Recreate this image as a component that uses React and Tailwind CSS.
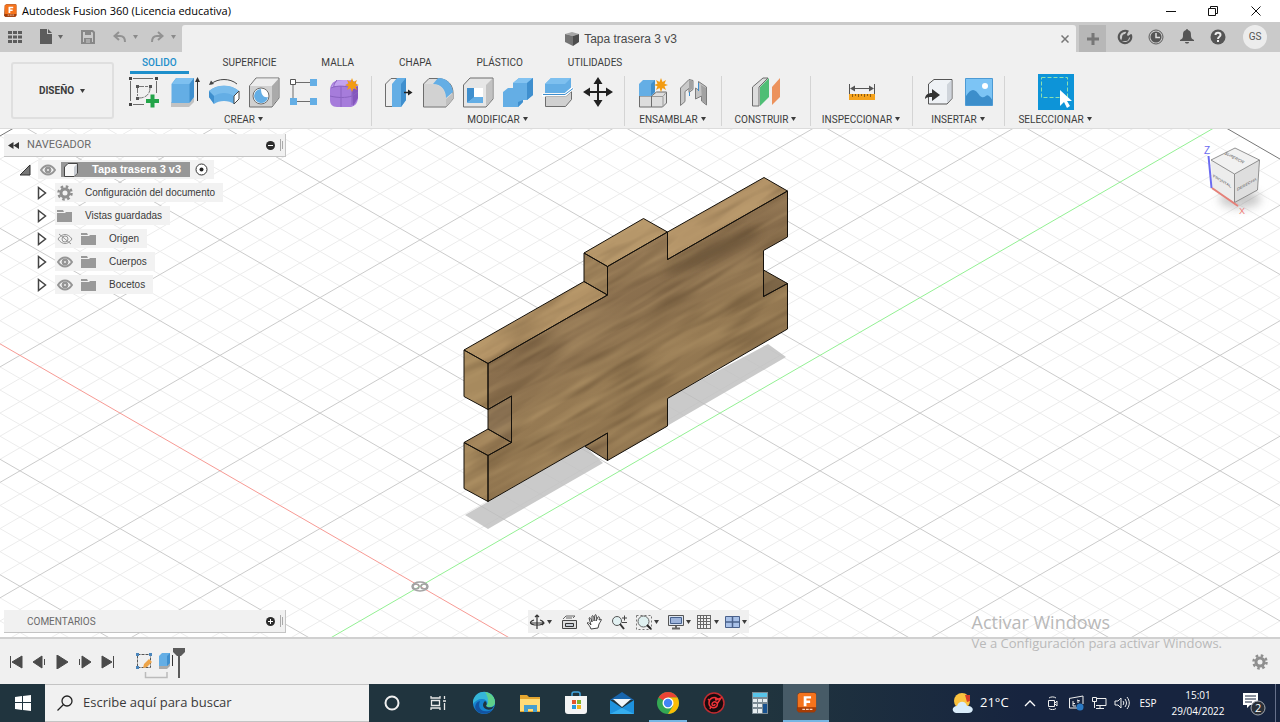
import React from "react";

const INK = "#4a4a4a";

/* ---------- shared pieces ---------- */

function Icon({ w = 16, h = w, box, children }) {
  return (
    <svg width={w} height={h} viewBox={box || `0 0 ${w} ${h}`} fill="none" aria-hidden="true" className="shrink-0">
      {children}
    </svg>
  );
}

function Caret({ color = "#3c3c3c" }) {
  return (
    <Icon w={7} h={6}>
      <path d="M1 1h5L3.500 5z" fill={color} />
    </Icon>
  );
}

function IconButton({ label, className = "", children }) {
  return (
    <button type="button" aria-label={label} className={`flex items-center justify-center ${className}`}>
      {children}
    </button>
  );
}

function FusionLogo({ size }) {
  return (
    <Icon w={size} box="0 0 24 24">
      <path d="M3 2 6 .5h15A2 2 0 0 1 23 3v16l-2 3H4l-2-2z" fill="#8a3206" />
      <path d="M5 1h16a2 2 0 0 1 2 2v14H3V3z" fill="#f5731c" />
      <path d="M3 17h20v3l-2 2H4l-2-2z" fill="#a63c05" />
      <path d="M9.500 4.500h8v2.600h-5v2.300h4v2.500h-4v3.600h-3z" fill="#fff" />
      <path d="M8 19h3M12 19h3M16 19h3" stroke="#f7d4bd" strokeWidth="1.500" />
    </Icon>
  );
}

/* ---------- ribbon icons ---------- */

const BLUE = "#64aee5";
const BLUE_D = "#3f8fce";
const LINE = "#6d6d6d";

function Star({ x, y }) {
  return (
    <path
      transform={`translate(${x} ${y})`}
      d="M0-7 1.500-3 5-5 3.500-1.300 7 0 3.500 1.300 5 5 1.500 3 0 7-1.500 3-5 5-3.500 1.300-7 0-3.500-1.300-5-5-1.500-3z"
      fill="#f39c12"
    />
  );
}

const ribbonIcons = {
  sketch: (
    <>
      <path d="M5 2.500h20M2.500 5v20M28.500 5v12M5 28.500h11" stroke={LINE} />
      <path d="M1 1h3v3H1zM27 1h3v3h-3zM1 27h3v3H1z" fill="#444" />
      <path d="M11 10.500h9M9.500 12v8M22 12c0 6-4 10-11 10" stroke="#777" strokeDasharray="5 1" />
      <path d="M8 9h3v3H8zM21 9h3v3h-3zM8 21h3v3H8z" fill="#555" />
      <path d="M24.500 18.500v13M18 25h13" stroke="#23a449" strokeWidth="4" />
    </>
  ),
  extrude: (
    <>
      <path d="M3 26v5h18l5-5v-4z" fill="#c2c2c2" />
      <path d="M3.500 8 8 2h18v19l-5 6H3.500z" fill={BLUE} />
      <path d="M4 8 8.500 2H26l-4.500 6z" fill="#7dc0f0" />
      <path d="M21.500 8 26 2v19l-4.500 6z" fill={BLUE_D} />
      <path d="M29.500 25V5" stroke="#333" />
      <path d="m29.500 1 2.500 5h-5z" fill="#333" />
    </>
  ),
  revolve: (
    <>
      <path d="M3 8c7-6 19-6 26 0" stroke="#444" />
      <path d="m1 9 2-4.500L6 8z" fill="#444" />
      <path d="M1 15c8-7 22-7 30 0v8l-5 5c-5-4-15-4-20 0l-5-7z" fill={BLUE} />
      <path d="M1 15c8-7 22-7 30 0l-5 5c-6-4-14-4-20 0z" fill="#79bcec" />
      <path d="m26 20 5-5v8l-5 5z" fill="#fff" stroke="#444" />
      <path d="M1 15v6l5 7v-8z" fill={BLUE_D} />
    </>
  ),
  hole: (
    <>
      <path d="M1.500 10 8 2h23v20l-7 9H1.500z" fill="#d0d0d0" stroke={LINE} />
      <path d="M2 10 8.500 2.500h22L24 10z" fill="#ededed" />
      <path d="M24 10 30.500 3v19L24 30z" fill="#aaa" />
      <circle cx="13" cy="20" r="8" fill="#fff" stroke={LINE} />
      <path d="M13 13a7 7 0 1 0 7 8c-4 1-7-2-7-8z" fill={BLUE} />
    </>
  ),
  pattern: (
    <>
      <path d="M8 6.500h14M5 9v14M8 25.500h14" stroke={LINE} />
      <path d="M2.500 3.500h5v5h-5z" fill="#fff" stroke="#555" />
      <path d="M22 3h7v7h-7zM2 22h7v7H2zM22 22h7v7h-7z" fill={BLUE} />
    </>
  ),
  form: (
    <>
      <path d="M2 14c0-5 3-9 9-10h11c6 1 8 5 8 9v8c0 6-3 9-7 10H9c-5 0-7-3-7-7z" fill="#a67cdb" />
      <path d="M3 12c2-5 6-8 12-8h8l-6 6H6z" fill="#c3a3ef" />
      <path d="m24 14 6-4v12l-5 8z" fill="#8457bd" />
      <path d="M2 20c8 2 16 2 22 0l6-4M13 10v21M3 12c7-3 14-2 21 0v17M9 4c-4 5-3 6-3 7" stroke="#8a63c0" />
      <Star x="24" y="9" />
    </>
  ),
  pressPull: (
    <>
      <path d="M3.500 8 9 2.500h8v28H3.500z" fill="#eee" stroke={LINE} />
      <path d="M10 8 15 2h9v22l-5 7h-9z" fill={BLUE} />
      <path d="M19 8 24 2v22l-5 7z" fill={BLUE_D} />
      <path d="M22 16.500h6" stroke="#222" strokeWidth="1.500" />
      <path d="m26 13.500 4.500 3-4.500 3z" fill="#222" />
    </>
  ),
  fillet: (
    <>
      <path d="M1.500 8 7 2.500h9C26 3 31 9 31 17v6l-7 8H1.500z" fill="#ddd" stroke={LINE} />
      <path d="M2 8h7c9 0 15 6 15 15v7H2z" fill="#d2d2d2" />
      <path d="M11 8 16 2c9 0 14 6 15 14l-7 6C24 14 19 8 11 8z" fill={BLUE} />
      <path d="m24 23 7-6v6l-7 8z" fill="#c0c0c0" />
    </>
  ),
  shell: (
    <>
      <path d="M1.500 9 8 2h23v21l-7 8H1.500z" fill="#e6e6e6" stroke={LINE} />
      <path d="m24 9 6.500-6.500V23L24 30z" fill="#c2c2c2" />
      <path d="M5 12h16v15H5z" fill="#fff" />
      <path d="M5 12h7v10l-7 5z" fill={BLUE_D} />
      <path d="m5 27 7-6h9v6z" fill={BLUE} />
    </>
  ),
  combine: (
    <>
      <path d="M1 16l5-4h5V7l6-5h14v17l-6 5h-4v2l-5 5H1z" fill={BLUE} />
      <path d="m11 7 6-5h14l-6 5z" fill="#83c3f1" />
      <path d="m25 7 6-5v17l-6 5zM16 26l5-2v2l-5 5z" fill={BLUE_D} />
    </>
  ),
  split: (
    <>
      <path d="M3.500 20.500h20l6-5v8l-6 7h-20z" fill="#d0d0d0" stroke={LINE} />
      <path d="M3 8l6-6h20v10l-6 5H3z" fill={BLUE} />
      <path d="m3 8 6-6h20l-6 6z" fill="#7ec0ef" />
      <path d="M0 19h23l8-7" stroke="#fff" strokeWidth="3" />
      <path d="M1 18.500h22l8-6" stroke={BLUE_D} />
    </>
  ),
  move: (
    <>
      <path d="M16 5v22M5 16h22" stroke="#222" strokeWidth="2" />
      <path d="m16 1 4.500 7h-9zM16 31l4.500-7h-9zM1 16l7-4.500v9zM31 16l-7-4.500v9z" fill="#222" />
    </>
  ),
  component: (
    <>
      <path d="M2.500 20h12v11h-12zM14.500 20l5-4h10v11l-4 4h-11z" fill="#ddd" stroke={LINE} />
      <path d="M2 8l4-4h12v12l-4 4H2z" fill={BLUE} />
      <path d="m14 8 4-4v12l-4 4z" fill={BLUE_D} />
      <path d="M15 20.500h11l3-4M26 21v9" stroke="#999" />
      <Star x="24" y="9" />
    </>
  ),
  joint: (
    <>
      <path d="M3.500 12 12 3.500l4 1v9l-4 3v-4l-4 3v10l-4.500 4z" fill="#c9c9c9" stroke="#7c7c7c" />
      <path d="M21.500 5.500 29.500 11v18l-5-4v-5l-6 3V12l3 2z" fill="#c3c3c3" stroke="#7c7c7c" />
      <path d="m24 9 5 3v16l-4-3zM12 4l3 1v8l-3 2z" fill="#a2a2a2" />
      <path d="M12.500 16v4M21.500 7v8" stroke={BLUE_D} />
    </>
  ),
  plane: (
    <>
      <path d="M2.500 11 13 2h5L9 11v19H2.500z" fill="#ddd" stroke={LINE} />
      <path d="M10 11 19 2v19l-9 9z" fill="#4fbe75" />
      <path d="m22 11 8-9v19l-8 8z" fill="#ec925c" />
    </>
  ),
  measure: (
    <>
      <path d="M3.500 8v10M28.500 8v10M6 12.500h20" stroke="#555" />
      <path d="m4 12.500 5-3v6zM28 12.500l-5-3v6z" fill="#555" />
      <path d="M3 18h26v6H3z" fill="#f5a31d" />
      <path d="M6.500 18v3M9.500 18v2M12.500 18v3M15.500 18v2M18.500 18v3M21.500 18v2M24.500 18v3" stroke="#8c5b10" />
    </>
  ),
  derive: (
    <>
      <path d="M5.500 8 11 3.500h18v19L24 28H5.500z" fill="#eff2f6" stroke="#555" />
      <path d="M24 8.500 28.500 4v18L24 27zM6 8.500h18" fill="#cfd4db" />
      <path d="M2 23c0-4 3-6 7-6v-4l8 6-8 6v-4c-3 0-5 0-7 2z" fill="#333" />
    </>
  ),
  image: (
    <>
      <path d="M2.500 2.500h27v27h-27z" fill="#7cc4f5" stroke="#4c9ad4" />
      <circle cx="22" cy="10" r="3" fill="#fff" />
      <path d="M3 20c5-8 9-8 14 0 5 4 6-3 9 0 2 2 3 3 3 4v5H3z" fill="#3c8ecb" />
    </>
  ),
  select: (
    <>
      <path d="M1.500 1.500h26v20h-26z" stroke="#8ce0b0" strokeDasharray="4 2" />
      <path d="M20 14v16l4-4 3 6 3-2-3-5h5z" fill="#fff" />
    </>
  ),
};

function RibbonGroup({ name, icons, width, active }) {
  return (
    <section className={`flex shrink-0 flex-col items-center ${width}`}>
      <div className="flex h-9 items-center">
        {icons.map((key) => (
          <IconButton key={key} label={key} className={active ? "h-9 w-9 bg-[#0d94d8]" : "h-9 w-10"}>
            <Icon w={32}>{ribbonIcons[key]}</Icon>
          </IconButton>
        ))}
      </div>
      <button type="button" className="flex h-[18px] items-center gap-[2px] whitespace-nowrap">
        {name}
        <Caret />
      </button>
    </section>
  );
}

const groups = [
  { name: "CREAR", width: "w-[251px] pr-[3px]", icons: ["sketch", "extrude", "revolve", "hole", "pattern", "form"] },
  { name: "MODIFICAR", width: "w-[252px]", icons: ["pressPull", "fillet", "shell", "combine", "split", "move"] },
  { name: "ENSAMBLAR", width: "w-[96px]", icons: ["component", "joint"] },
  { name: "CONSTRUIR", width: "w-[88px]", icons: ["plane"] },
  { name: "INSPECCIONAR", width: "w-[101px]", icons: ["measure"] },
  { name: "INSERTAR", width: "w-[91px]", icons: ["derive", "image"] },
  { name: "SELECCIONAR", width: "w-[101px]", icons: ["select"], active: true },
];

/* ---------- top bars ---------- */

function TitleBar() {
  return (
    <header className="flex h-[22px] shrink-0 items-center bg-white pl-[3px] font-['Open_Sans',sans-serif] text-[11px] text-black">
      <FusionLogo size={14} />
      <h1 className="ml-[5px] flex-1">Autodesk Fusion 360 (Licencia educativa)</h1>
      <IconButton label="Minimizar" className="h-5 w-[42px]">
        <Icon w={10}><path d="M0 5.500h10" stroke="#111" /></Icon>
      </IconButton>
      <IconButton label="Restaurar" className="h-5 w-[42px]">
        <Icon w={10}><path d="M.5 2.500h7v7h-7zM2.500 2V.5h7v7H8" stroke="#111" /></Icon>
      </IconButton>
      <IconButton label="Cerrar" className="mr-[2px] h-5 w-[44px]">
        <Icon w={10}><path d="m.5.5 9 9m0-9-9 9" stroke="#111" /></Icon>
      </IconButton>
    </header>
  );
}

function TabBar() {
  return (
    <div className="flex h-[30px] shrink-0 bg-[#cacaca] pt-[3px]">
      <div className="flex w-[182px] shrink-0 items-center pb-1 pl-2">
        <IconButton label="Panel de datos">
          <Icon w={14}>
            <path d="M0 1h4v3H0zM5 1h4v3H5zM10 1h4v3h-4zM0 5.500h4v3H0zM5 5.500h4v3H5zM10 5.500h4v3h-4zM0 10h4v3H0zM5 10h4v3H5zM10 10h4v3h-4z" fill="#5c5c5c" />
          </Icon>
        </IconButton>
        <IconButton label="Archivo" className="ml-[17px] gap-1">
          <Icon w={14} h={15}><path d="M1 0h7v5h5v10H1zM9 0l4 4H9z" fill="#5c5c5c" /></Icon>
          <Caret color="#666" />
        </IconButton>
        <IconButton label="Guardar" className="ml-[17px]">
          <Icon w={14}>
            <path d="M1 1h10.500L13 2.500V13H1z" stroke="#888" strokeWidth="2" />
            <path d="M4 1h6v4H4zM3 8h8v5H3z" fill="#888" />
            <path d="M5 10h4M5 12h4" stroke="#cacaca" />
          </Icon>
        </IconButton>
        <IconButton label="Deshacer" className="ml-[18px] gap-[6px]">
          <Icon w={13} h={12}><path d="M6 1 1.500 5 6 9M2 5h5c3 0 5 2 5 6" stroke="#929292" strokeWidth="2" /></Icon>
          <Caret color="#8a8a8a" />
        </IconButton>
        <IconButton label="Rehacer" className="ml-3 gap-[6px]">
          <Icon w={13} h={12}><path d="M7 1 11.500 5 7 9M11 5H6c-3 0-5 2-5 6" stroke="#929292" strokeWidth="2" /></Icon>
          <Caret color="#8a8a8a" />
        </IconButton>
      </div>
      <div className="flex flex-1 items-center rounded-t-[3px] bg-[#f0f0f0] pr-[5px]">
        <div className="flex flex-1 items-center justify-center gap-1 font-['Liberation_Sans',sans-serif] text-[12px] text-[#4a4a4a]">
          <Icon w={16}>
            <path d="m1 3 7-2 7 2-6 2z" fill="#a7a7a7" />
            <path d="m1 3 8 2v10l-8-4z" fill="#747474" />
            <path d="m9 5 6-2v8l-6 4z" fill="#4d4d4d" />
          </Icon>
          Tapa trasera 3 v3
        </div>
        <IconButton label="Cerrar documento" className="h-4 w-3">
          <Icon w={8}><path d="m.5.5 7 7m0-7-7 7" stroke="#777" strokeWidth="1.500" /></Icon>
        </IconButton>
      </div>
      <IconButton label="Nuevo diseño" className="ml-[3px] w-[27px] bg-[#b7b7b7]">
        <Icon w={12}><path d="M6 0v12M0 6h12" stroke="#777" strokeWidth="3" /></Icon>
      </IconButton>
      <div className="flex items-center pb-1 pl-[3px]">
        <IconButton label="Extensiones" className="w-[31px]">
          <Icon w={16}>
            <circle cx="8" cy="8" r="6.200" stroke="#555" strokeWidth="2.200" strokeDasharray="34 5" transform="rotate(-20 8 8)" />
            <path d="M4 12 5 9c0-3 1-4 3-4l2-3 1 1-1 3 1 1 3-2 1 1-3 3c-1 3-2 3-4 3z" fill="#555" />
          </Icon>
        </IconButton>
        <IconButton label="Estado de trabajos" className="w-[31px]">
          <Icon w={16}>
            <circle cx="8" cy="8" r="7" stroke="#5c5c5c" />
            <circle cx="8" cy="8" r="5.500" fill="#555" />
            <path d="M8 4v4.500h4" stroke="#ddd" strokeWidth="1.500" />
          </Icon>
        </IconButton>
        <IconButton label="Notificaciones" className="w-[31px]">
          <Icon w={14} h={15}><path d="M7 0c1 0 1 1 1 1 3 1 3 3 3 6 0 2 1 3 3 4v1H0v-1c2-1 3-2 3-4 0-3 0-5 3-6 0 0 0-1 1-1zM5 13h4c0 2-4 2-4 0z" fill="#555" /></Icon>
        </IconButton>
        <IconButton label="Ayuda" className="w-[31px]">
          <Icon w={16}>
            <circle cx="8" cy="8" r="7.500" fill="#555" />
            <path d="M5.500 6c0-3 5-3 5 0 0 2-2.500 1.500-2.500 4M8 11v2" stroke="#eee" strokeWidth="2" />
          </Icon>
        </IconButton>
        <button type="button" className="mr-[13px] ml-[10px] h-6 w-6 rounded-full bg-[#ececec] font-['Roboto',sans-serif] text-[10px] text-[#555]">GS</button>
      </div>
    </div>
  );
}

function Ribbon() {
  const tabs = ["SUPERFICIE", "MALLA", "CHAPA", "PLÁSTICO", "UTILIDADES"];
  return (
    <div className="flex h-[77px] shrink-0 border-b border-[#dcdcdc] bg-[#f0f0f0] font-['Roboto',sans-serif] text-[10px] text-[#3c3c3c]">
      <button type="button" className="mt-[10px] ml-[11px] flex h-[57px] w-[103px] shrink-0 items-center justify-center gap-[5px] rounded-[3px] border-2 border-[#dfdfdf] font-bold">
        DISEÑO <Caret />
      </button>
      <div className="ml-[6px] flex flex-col">
        <nav className="flex h-[22px] gap-[23px] pl-[10px]">
          <button type="button" className="border-b-[3px] border-[#1e8fcb] px-3 pt-[2px] font-medium text-[#1e8fcb]">SOLIDO</button>
          {tabs.map((t) => (
            <button type="button" key={t} className="border-b-[3px] border-transparent px-[11px] pt-[2px]">{t}</button>
          ))}
        </nav>
        <div className="flex">
          {groups.map((g, i) => (
            <React.Fragment key={g.name}>
              {i > 0 && <div className="my-[2px] w-px bg-[#d4d4d4]" />}
              <RibbonGroup {...g} />
            </React.Fragment>
          ))}
        </div>
      </div>
    </div>
  );
}

/* ---------- 3D viewport ---------- */

const SLOPE = 0.57735;
const OX = 420;
const OY = 586.3;

function gridLines() {
  const lines = [];
  const pt = (u, v) => [OX + (u + v) * 20, OY + (u - v) * 20 * SLOPE];
  // u runs down-right along the red axis, v runs up-right along the green axis
  for (let n = -30; n <= 60; n++) {
    const major = n % 5 === 0;
    if (n <= 40) {
      const [x1, y1] = pt(-30, n);
      const [x2, y2] = pt(60, n);
      lines.push({ k: `u${n}`, x1, y1, x2, y2, major, edge: n === 40, axis: n === 0 ? "#f79a94" : null });
    }
    const [x1, y1] = pt(n, -40);
    const [x2, y2] = pt(n, 40);
    lines.push({ k: `v${n}`, x1, y1, x2, y2, major, edge: n === -30, axis: n === 0 ? "#93f093" : null });
  }
  return lines.sort((a, b) => rank(a) - rank(b));
}

function rank(l) {
  return l.axis ? 2 : l.major ? 1 : 0;
}

function strokeOf(l) {
  if (l.axis) return l.axis;
  if (l.edge) return "#777";
  return l.major ? "#cbcbcb" : "#ececec";
}

const FRONT =
  "488,363.500 607.500,295 607.500,266.500 667.500,232 667.500,259.500 787.500,191 787.500,237 763.500,250.500 763.500,296.500 787.500,283.500 787.500,329 667.500,398.500 667.500,426 607.500,460.500 607.500,433 488,501.500 488,455.500 511.500,442.500 511.500,396 488,409.500";

const SIDES = [
  ["464,350 488,363.500 607.500,295 584,281.500", "#b39366"],
  ["464,350 488,363.500 488,409.500 464,396.500", "#a78a5e"],
  ["488,409.500 511.500,396 511.500,442.500 488,429", "#8a7152"],
  ["464,442.500 488,429 511.500,442.500 488,455.500", "#a08259"],
  ["464,442.500 488,455.500 488,501.500 464,488.500", "#a4875c"],
  ["584,253 607.500,266.500 607.500,295 584,281.500", "#9b7f58"],
  ["584,253 643.500,218.500 667.500,232 607.500,266.500", "#b6976a"],
  ["667.500,232 764,177.500 787.500,191 667.500,259.500", "#b49468"],
  ["763.500,270 787.500,283.500 763.500,296.500", "#7f6849"],
  ["585,446.500 607.500,433 607.500,460.500", "#876d4c"],
];

function Model() {
  return (
    <g>
      <path d="M465 515 585 446l18 17-115 66zM667 398l101-54 18 13-119 69z" fill="#bdbdbd" fillOpacity=".8" />
      <clipPath id="silhouette">
        <polygon points={FRONT} />
        {SIDES.map(([p]) => <polygon key={p} points={p} />)}
      </clipPath>
      {SIDES.map(([p, c]) => <polygon key={p} points={p} fill={c} />)}
      <polygon points={FRONT} fill="url(#wood)" />
      <g clipPath="url(#silhouette)">
        <g transform="rotate(-29 626 340)">
          <rect x="400" y="140" width="460" height="400" filter="url(#grain)" />
          <rect x="400" y="140" width="460" height="400" filter="url(#shine)" />
        </g>
      </g>
      <clipPath id="front"><polygon points={FRONT} /></clipPath>
      <g clipPath="url(#front)">
        <ellipse cx="712" cy="252" rx="52" ry="8" transform="rotate(-24 712 252)" fill="#4f3d28" opacity=".45" filter="url(#soft)" />
      </g>
      <g stroke="#15110b" strokeLinejoin="round">
        {SIDES.map(([p]) => <polygon key={p} points={p} />)}
        <polygon points={FRONT} />
      </g>
    </g>
  );
}

function ViewCube() {
  return (
    <g>
      <ellipse cx="1240" cy="199" rx="21" ry="9" fill="#777" opacity=".4" filter="url(#soft)" />
      <path d="m1211 160 24-12 24.500 12-25 14z" fill="#f1f1f1" />
      <path d="m1211 160 23.500 14v28.500L1212 188z" fill="#ececec" />
      <path d="m1234.500 174 25-14-2 30-23 12.500z" fill="#dedede" />
      <path d="m1211 160 24-12 24.500 12-25 14zM1234.500 174v28.500l23-12.500 2-30" stroke="#777" strokeWidth=".8" />
      <path d="m1208.500 156 3 32" stroke="#6b6bf0" strokeWidth="2" />
      <path d="m1212 188 26 18" stroke="#e58078" strokeWidth="2" />
      <g fontFamily="Liberation Sans, sans-serif" fill="#555" fontSize="4">
        <text x="1204" y="154" fontSize="10" fill="#6b6bf0">Z</text>
        <text x="1239" y="214" fontSize="9" fill="#ee7d78">X</text>
        <text transform="translate(1224 154) rotate(27) skewX(-25)">SUPERIOR</text>
        <text transform="translate(1213 177) skewY(31)">FRONTAL</text>
        <text transform="translate(1237 191) skewY(-29)">DERECHA</text>
      </g>
    </g>
  );
}

function Scene() {
  return (
    <svg viewBox="0 129 1280 508" preserveAspectRatio="xMidYMid slice" fill="none" aria-label="Modelo 3D" className="absolute inset-0 h-full w-full">
      <defs>
        <linearGradient id="wood" gradientUnits="userSpaceOnUse" x1="600" y1="260" x2="690" y2="420">
          <stop offset="0" stopColor="#917552" />
          <stop offset=".3" stopColor="#896e4d" />
          <stop offset=".6" stopColor="#967a53" />
          <stop offset="1" stopColor="#8c714c" />
        </linearGradient>
        <filter id="soft" x="-50%" y="-150%" width="200%" height="400%">
          <feGaussianBlur stdDeviation="5" />
        </filter>
        <filter id="grain" x="0" y="0" width="100%" height="100%" colorInterpolationFilters="sRGB">
          <feTurbulence type="fractalNoise" baseFrequency=".014 .09" numOctaves="2" seed="8" />
          <feColorMatrix values="0 0 0 0 .3  0 0 0 0 .22  0 0 0 0 .13  .9 0 0 0 -.4" />
        </filter>
        <filter id="shine" x="0" y="0" width="100%" height="100%" colorInterpolationFilters="sRGB">
          <feTurbulence type="fractalNoise" baseFrequency=".011 .11" numOctaves="2" seed="21" />
          <feColorMatrix values="0 0 0 0 .8  0 0 0 0 .68  0 0 0 0 .48  .8 0 0 0 -.34" />
        </filter>
      </defs>
      {gridLines().map((l) => (
        <line key={l.k} x1={l.x1} y1={l.y1} x2={l.x2} y2={l.y2} stroke={strokeOf(l)} />
      ))}
      <g stroke="#a3a3a3" strokeWidth="1.500">
        <ellipse cx="420" cy="586.500" rx="8" ry="4.500" />
        <ellipse cx="416" cy="586.500" rx="3" ry="2.500" />
        <ellipse cx="424" cy="586.500" rx="3" ry="2.500" />
      </g>
      <Model />
      <ViewCube />
    </svg>
  );
}

/* ---------- browser tree ---------- */

function Eye({ off }) {
  return (
    <Icon w={16} h={12}>
      <path d="M1 6c4-6 10-6 14 0-4 6-10 6-14 0z" stroke="#959595" strokeWidth={off ? 1 : 2} />
      <circle cx="8" cy="6" r="3" fill={off ? "none" : "#959595"} stroke="#959595" />
      {off ? <path d="m2 1 12 10" stroke="#959595" /> : <circle cx="8" cy="6" r="1" fill="#eee" />}
    </Icon>
  );
}

function Folder() {
  return (
    <Icon w={16} h={14}>
      <path d="M0 1h6l1 2H0zM0 4h8l1-1h6v10H0z" fill="#999" />
    </Icon>
  );
}

function Gear() {
  return (
    <Icon w={16}>
      <circle cx="8" cy="8" r="4" stroke="#8f8f8f" strokeWidth="3" />
      <circle cx="8" cy="8" r="6.500" stroke="#8f8f8f" strokeWidth="2.500" strokeDasharray="2.550 2.550" />
    </Icon>
  );
}

function PanelHeader({ title, left, symbol, size }) {
  return (
    <div className="flex h-[23px] w-[282px] shrink-0 items-center border-r border-b border-[#c4c4c4] bg-[#f1f1f1] pr-px pl-1">
      <div className="w-[19px]">{left}</div>
      <h2 className={`flex-1 font-['Roboto',sans-serif] text-[#6a6a6a] ${size}`}>{title}</h2>
      <IconButton label={title} className="mr-[5px]">
        <Icon w={9}>
          <circle cx="4.500" cy="4.500" r="4.500" fill="#2c2c2c" />
          <path d={symbol} stroke="#fff" />
        </Icon>
      </IconButton>
      <Icon w={4} h={12}><path d="M.5 0v12M2.500 2v8" stroke="#aaa" /></Icon>
    </div>
  );
}

function TreeItem({ label, icon, eye, off }) {
  return (
    <li className="flex h-[19px] items-center pl-7">
      <IconButton label={`Expandir ${label}`} className="mr-[3px] w-5">
        <Icon w={10} h={14}><path d="m1.500 1.500 7 5.500-7 5.500z" fill="#fff" stroke="#444" strokeWidth="1.500" /></Icon>
      </IconButton>
      <div className="flex h-[19px] items-center gap-2 bg-[#f2f2f2] px-[2px] pr-2">
        {eye && <IconButton label={`Visibilidad de ${label}`}><Eye off={off} /></IconButton>}
        {icon}
        <span className="ml-[4px] text-[10px]">{label}</span>
      </div>
    </li>
  );
}

function Tree() {
  return (
    <ul className="flex flex-col gap-1 pt-[3px] font-['Liberation_Sans',sans-serif] text-[11px] text-[#3a3a3a]">
      <li className="flex h-[19px] items-center pl-[15px]">
        <IconButton label="Contraer"><Icon w={12}><path d="M1 11 11 1v10z" fill="#777" stroke="#333" /></Icon></IconButton>
        <div className="ml-[7px] flex h-[19px] items-center bg-[#f2f2f2] pr-[6px] pl-[2px]">
          <IconButton label="Visibilidad"><Eye /></IconButton>
          <div className="ml-[5px] flex h-[15px] w-[129px] items-center bg-[#979797] pl-[2px] font-bold text-white">
            <Icon w={16}>
              <path d="M1.500 5 5 1.500h9.500V11L11 14.500H1.500z" fill="#f8f8f8" stroke="#444" />
              <path d="M11 5 14 2v9l-3 3z" fill="#c8ccd2" />
            </Icon>
            <span className="ml-[13px] whitespace-nowrap">Tapa trasera 3 v3</span>
          </div>
          <IconButton label="Activar componente" className="ml-[5px]">
            <Icon w={13}><circle cx="6.500" cy="6.500" r="5.500" fill="#fff" stroke="#333" /><circle cx="6.500" cy="6.500" r="2" fill="#222" /></Icon>
          </IconButton>
        </div>
      </li>
      <TreeItem label="Configuración del documento" icon={<Gear />} />
      <TreeItem label="Vistas guardadas" icon={<Folder />} />
      <TreeItem label="Origen" icon={<Folder />} eye off />
      <TreeItem label="Cuerpos" icon={<Folder />} eye />
      <TreeItem label="Bocetos" icon={<Folder />} eye />
    </ul>
  );
}

/* ---------- navigation bar ---------- */

const navTools = [
  { label: "Órbita", caret: true, art: <path d="M8 1v14M6 3l2-2 2 2M1 9h14M13 7l2 2-2 2M5 6c-6 2-4 5 3 5s9-3 3-5" stroke="#333" strokeWidth="1.200" /> },
  { label: "Mirar a", art: <><path d="M1.500 6.500h14v8h-14z" stroke="#444" fill="#ddd" /><path d="M4.500 9.500h8v3h-8z" fill="#c3cad4" stroke="#333" /><path d="m2 5 3-3h9l-2 2M5 4h6" stroke="#666" /></> },
  { label: "Encuadre", art: <path d="M5 15c-1-3-3-5-4-6 1-1 2 0 4 2L3 4c1-1 2 0 3 4L6 2c1-1 2 0 2 5l1-6c1-1 2 0 1 6l2-4c1-1 2 0 1 3l2-1c1 1-1 3-2 5l-1 4z" stroke="#444" fill="#fff" /> },
  { label: "Zoom", art: <><circle cx="6" cy="7" r="4.500" fill="#e2f1f2" stroke="#555" /><path d="m9 10 4 5" stroke="#333" strokeWidth="2" /><path d="M11 4h5M13.500 1.500v5M11 8.500h5" stroke="#444" /></> },
  { label: "Ajustar", caret: true, art: <><path d="M.5 1.500h15v14H.5z" stroke="#777" strokeDasharray="2 2" /><circle cx="7.500" cy="7.500" r="5.500" fill="#dff0f0" stroke="#666" /><path d="m11 11 4 4" stroke="#222" strokeWidth="2" /></> },
  { label: "Visualización", caret: true, art: <><path d="M.5 1.500h15v10H.5z" fill="#dce4f0" stroke="#555" /><path d="M2.500 3.500h11v6h-11z" fill="#9db4dc" stroke="#46618e" /><path d="M8 12v2M4 14.500h8" stroke="#666" strokeWidth="2" /></> },
  { label: "Rejilla", caret: true, art: <path d="M1 1.500h14M1 4.500h14M1 7.500h14M1 10.500h14M1 14.500h14M1.500 1v14M4.500 1v14M7.500 1v14M10.500 1v14M14.500 1v14" stroke="#666" /> },
  { label: "Ventanas", caret: true, art: <><path d="M1.500 2.500h14v11h-14z" fill="#a9c1e8" stroke="#4a618b" /><path d="M8.500 2v12M1 8h15" stroke="#4a618b" strokeWidth="1.500" /></> },
];

function NavBar() {
  return (
    <div className="flex h-[23px] items-center bg-[#f0f0f0] px-px">
      {navTools.map((t, i) => (
        <IconButton key={t.label} label={t.label} className={`h-5 ${i < 5 ? "mr-2" : "mr-1"} last:mr-0`}>
          <Icon w={17} h={16}>{t.art}</Icon>
          {t.caret && <Caret />}
        </IconButton>
      ))}
    </div>
  );
}

function Viewport() {
  return (
    <main className="relative flex min-h-0 flex-1 flex-col justify-between overflow-hidden bg-white">
      <Scene />
      <div className="relative flex flex-col pt-[5px] pl-1">
        <PanelHeader
          title="NAVEGADOR"
          size="text-[11px]"
          symbol="M2 4.500h5"
          left={<Icon w={11} h={7}><path d="M5.500 0v7L0 3.500zM11 0v7L5.500 3.500z" fill="#333" /></Icon>}
        />
        <Tree />
      </div>
      <div className="relative grid grid-cols-[1fr_auto_1fr] pr-2 pb-1 pl-1">
        <PanelHeader title="COMENTARIOS" size="text-[10px]" symbol="M2 4.500h5M4.500 2v5" />
        <NavBar />
      </div>
    </main>
  );
}

/* ---------- timeline ---------- */

const playback = [
  ["Inicio", "M1.500 1v12M13 1v12L3 7z"],
  ["Anterior", "M10 1v12L1 7zM12.500 4v6"],
  ["Reproducir", "M2 0v14l11-7z"],
  ["Siguiente", "M4 1v12l9-6zM1.500 4v6"],
  ["Final", "M12.500 1v12M1 1v12l10-6z"],
];

function Timeline() {
  return (
    <footer className="flex h-[47px] shrink-0 items-center border-t-2 border-[#d0d0d0] bg-[#f0f0f0] pr-3 pl-1">
      {playback.map(([label, d]) => (
        <IconButton key={label} label={label} className="h-6 w-[23px]">
          <Icon w={14}><path d={d} fill={INK} stroke={INK} strokeWidth="1" /></Icon>
        </IconButton>
      ))}
      <Icon w={54} h={34}>
        <g transform="translate(8 0)">
          <path d="M10.500 9.500h13v13h-13z" stroke="#555" strokeDasharray="3 1" />
          <path d="M9 8h3v3H9zM22 8h3v3h-3zM9 21h3v3H9z" fill="#4a86bd" />
          <path d="m16 23 1-4 5-5 3 3-5 5z" fill="#eda448" />
          <path d="M32 20v4h8l3-3v-4z" fill="#aaa" />
          <path d="m32 11 3-3h8v10l-3 3h-8z" fill={BLUE} />
          <path d="m40 11 3-3v10l-3 3z" fill={BLUE_D} />
          <path d="M45.500 10v11" stroke="#333" />
          <path d="M18.500 27v5.500H40V27" stroke="#bbb" strokeWidth="1.500" />
        </g>
      </Icon>
      <Icon w={12} h={34}>
        <path d="M0 3h12v4l-4 4H4L0 7z" fill="#5b5b5b" />
        <path d="M6 8v25" stroke="#5b5b5b" strokeWidth="2" />
      </Icon>
      <IconButton label="Configuración" className="ml-auto"><Gear /></IconButton>
    </footer>
  );
}

/* ---------- taskbar ---------- */

const apps = [
  { label: "Cortana", art: <circle cx="12" cy="12" r="6.500" stroke="#f0f0f0" strokeWidth="2" /> },
  { label: "Vista de tareas", art: <path d="M5 5v2h9V5M5 19v-2h9v2M5.500 9.500h8v5h-8zM18.500 5v3M18.500 12v7M17 10h3" stroke="#e8e8e8" strokeWidth="1.300" /> },
  {
    label: "Edge",
    art: (
      <>
        <circle cx="12" cy="12" r="11" fill="#1683cf" />
        <path d="M1 10C4-3 22-2 23 11c0 5-5 6-9 4 3-3 1-7-4-7-4 0-7 2-9 5z" fill="#35b6d8" />
        <path d="M13 1c7 1 10 6 10 10 0 5-5 6-9 4 3-2 3-8-1-14z" fill="#5fd08a" />
        <path d="M8 10c-3 7 2 13 12 9-3 5-12 5-16 0-2-4 0-8 4-9z" fill="#1253a2" />
        <path d="M13 10c2 1 2 3 1 5 2 2 5 2 8 0l-2 3c-5 2-9-1-9-4 0-2 1-3 2-4z" fill="#20333d" />
      </>
    ),
  },
  { label: "Explorador de archivos", art: <><path d="M2 4h7l2 2h11v15H2z" fill="#e5a62f" /><path d="M2 8h20v12H2z" fill="#ffdc77" /><path d="M6 21v-7h13v7h-4v-3h-5v3z" fill="#469fce" /></> },
  {
    label: "Microsoft Store",
    art: (
      <>
        <path d="M8 7V3q0-2 2-2h4q2 0 2 2v4" stroke="#42a5df" strokeWidth="1.500" />
        <path d="M1 5h22v15q0 3-3 3H4q-3 0-3-3z" fill="#f4f4f4" />
        <path d="M8 9h4v4H8z" fill="#e5532b" /><path d="M13 9h4v4h-4z" fill="#7fb32a" />
        <path d="M8 14h4v4H8z" fill="#279bdb" /><path d="M13 14h4v4h-4z" fill="#f1b51c" />
      </>
    ),
  },
  { label: "Correo", art: <><path d="m0 9 12-8 12 8z" fill="#1765ad" /><path d="M3 8h18l-9 8z" fill="#f1f6fa" /><path d="M0 9l12 8 12-8v14H0z" fill="#1e92dd" /><path d="m0 23 12-6 12 6z" fill="#36aeee" /></> },
  {
    label: "Chrome",
    running: true,
    art: (
      <>
        <circle cx="12" cy="12" r="11" fill="#34a853" />
        <path d="M12 12 2.500 6.500A11 11 0 0 1 21.500 6.500H12z" fill="#ea4335" />
        <path d="M12 6.500h9.500A11 11 0 0 1 12 23l5-8z" fill="#fbbc05" />
        <circle cx="12" cy="12" r="5.500" fill="#fff" /><circle cx="12" cy="12" r="4.200" fill="#4285f4" />
      </>
    ),
  },
  { label: "Grabador", art: <><circle cx="12" cy="12" r="10" fill="#180b0d" stroke="#c42b30" strokeWidth="1.500" /><path d="M16 8c-4-3-9-1-9 4s6 6 8 3c2-4-4-6-5-2 0 2 3 2 3 0M6 8l2 2M13 6l1 3 5-2-4 6M8 18l1-3" stroke="#ee3338" strokeWidth="1.500" /></> },
  {
    label: "Calculadora",
    art: (
      <>
        <path d="M4 1h16v22H4z" fill="#7b8b94" />
        <path d="M5 2h14v4H5z" fill="#58c5e9" />
        <path d="M5 8h4v3H5zM10 8h4v3h-4zM15 8h4v3h-4zM5 13h4v3H5zM10 13h4v3h-4zM5 18h4v4H5zM10 18h4v4h-4z" fill="#e5edf0" />
        <path d="M15 13h4v9h-4z" fill="#17528f" />
      </>
    ),
  },
  { label: "Fusion 360", running: true, active: true },
];

function Taskbar() {
  return (
    <div className="flex h-[38px] shrink-0 bg-gradient-to-r from-[#20343e] from-60% to-[#17243f] to-80% font-['Open_Sans',sans-serif] text-white">
      <IconButton label="Inicio" className="w-[45px] shrink-0">
        <Icon w={16}><path d="m0 2 7-1v6H0zM8 1l8-1v7H8zM0 8h7v7l-7-1zM8 8h8v8l-8-1z" fill="#fff" /></Icon>
      </IconButton>
      <label className="flex w-[324px] shrink-0 items-center border-y border-[#c4c4c4] bg-[#f1f1f1] pl-3">
        <Icon w={16}><circle cx="10" cy="6" r="5" stroke="#222" strokeWidth="1.300" /><path d="m6.500 9.500-6 6" stroke="#222" strokeWidth="1.300" /></Icon>
        <input aria-label="Buscar" placeholder="Escribe aquí para buscar" className="ml-[10px] w-full min-w-0 bg-transparent text-[13px] outline-none placeholder:text-[#3a3a3a]" />
      </label>
      {apps.map((a) => (
        <IconButton key={a.label} label={a.label} className={`w-[46px] shrink-0 flex-col ${a.active ? "bg-[#475b67]" : ""}`}>
          <span className="flex flex-1 items-center pt-[2px]">{a.art ? <Icon w={24}>{a.art}</Icon> : <FusionLogo size={22} />}</span>
          <span className={`h-[2px] ${a.active ? "w-full" : "w-[38px]"} ${a.running ? "bg-[#76b5e2]" : ""}`} />
        </IconButton>
      ))}
      <div className="ml-auto flex items-center text-[12px]">
        <Icon w={22} h={22}>
          <circle cx="10" cy="9" r="8" fill="#fbc23e" />
          <path d="M13 3h5v6l-3 1z" fill="#d63c2c" />
          <path d="M4 21c-5-1-4-7 1-7 2-6 9-5 10 0 7-1 8 7 1 7z" fill="#d9ecfa" />
        </Icon>
        <span className="ml-[6px] w-[38px] text-[13px]">21°C</span>
        <IconButton label="Iconos ocultos" className="w-[23px]"><Icon w={12} h={8}><path d="m1 7 5-5 5 5" stroke="#fff" strokeWidth="1.300" /></Icon></IconButton>
        <IconButton label="Reunirse ahora" className="w-[23px]"><Icon w={14}><path d="M2.500 4.500h6v6h-6zM9 7l2-2v5L9 8M3 2c2-1.500 5-1.500 7 0M3 12.500c2 1.500 5 1.500 7 0" stroke="#eee" /></Icon></IconButton>
        <IconButton label="Actualización" className="w-[23px]"><Icon w={16}><path d="M1.500 4v9h8M1 3.500 15 1v8M5 6v5h3M5 8.500h2M9 5l3 1M10 5v3" stroke="#eee" /><circle cx="12" cy="12" r="3.500" fill="#2a79c4" /></Icon></IconButton>
        <IconButton label="Red" className="w-[23px]"><Icon w={16} h={14}><path d="M5 2.500h10v7H5M1.500 1.500h4v4h-4zM3.500 6v6M9 10v2.500M5 12.500h8" stroke="#eee" /></Icon></IconButton>
        <IconButton label="Volumen" className="w-[23px]"><Icon w={16} h={14}><path d="M1 5h3l3-3v10L4 9H1zM9 5c1 1 1 3 0 4M11 3c2 3 2 5 0 8M13 1c3 4 3 8 0 12" stroke="#eee" /></Icon></IconButton>
        <button type="button" className="ml-[5px] w-[20px] text-[10px]">ESP</button>
        <time className="ml-2 w-[64px] text-center text-[10px] leading-4">15:01<br />29/04/2022</time>
        <IconButton label="2 notificaciones" className="ml-[12px] w-[23px]">
          <Icon w={24} h={26}>
            <path d="M1 3h15v12H8l-3 3v-3H1z" fill="#fff" />
            <path d="M3 6h11M3 9h11M3 12h7" stroke="#17243f" />
            <circle cx="16" cy="18" r="7" fill="#2b3038" stroke="#a4a9b0" />
            <text x="13" y="22" fontSize="11" fill="#fff" fontFamily="Open Sans, sans-serif">2</text>
          </Icon>
        </IconButton>
        <div className="mr-1 ml-[10px] h-[38px] w-px bg-[#66708a]" />
      </div>
    </div>
  );
}

export default function App() {
  return (
    <div className="relative flex h-screen flex-col overflow-hidden bg-[#f0f0f0]">
      <TitleBar />
      <TabBar />
      <Ribbon />
      <Viewport />
      <Timeline />
      <Taskbar />
      <aside className="pointer-events-none absolute right-[58px] bottom-[70px] font-['Open_Sans',sans-serif] text-[#b9b9b9]">
        <p className="text-[18px] leading-6">Activar Windows</p>
        <p className="text-[13px] leading-[18px]">Ve a Configuración para activar Windows.</p>
      </aside>
    </div>
  );
}
